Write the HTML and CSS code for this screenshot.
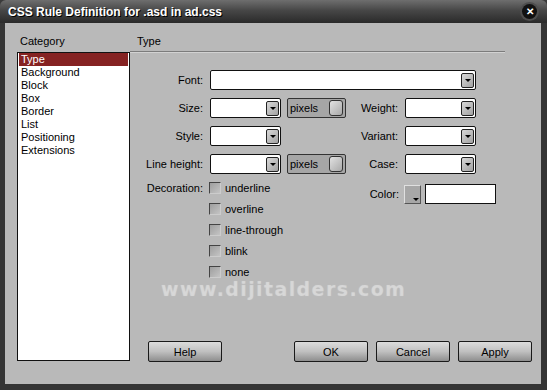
FILE: index.html
```html
<!DOCTYPE html>
<html>
<head>
    <title>CSS Rule Definition</title>
    <link rel="stylesheet" href="styles.css">
</head>
<body>
    <div class="window">
        <div class="titlebar">
            <span class="title">CSS Rule Definition for .asd in ad.css</span>
            <span class="close">&#x2715;</span>
        </div>

        <div class="dialog">
            <div class="category-col">
                <div class="col-head">Category</div>
                <ul class="category-list">
                    <li class="selected">Type</li>
                    <li>Background</li>
                    <li>Block</li>
                    <li>Box</li>
                    <li>Border</li>
                    <li>List</li>
                    <li>Positioning</li>
                    <li>Extensions</li>
                </ul>
            </div>

            <div class="panel">
                <div class="panel-head">Type</div>

                <div class="form">
                    <div class="row">
                        <label class="lbl">Font:</label>
                        <div class="select wide"><span class="arrow"></span></div>
                    </div>
                    <div class="row">
                        <label class="lbl">Size:</label>
                        <div class="select"><span class="arrow"></span></div>
                        <div class="unit">pixels<span class="toggle"></span></div>
                        <label class="lbl-r">Weight:</label>
                        <div class="select"><span class="arrow"></span></div>
                    </div>
                    <div class="row">
                        <label class="lbl">Style:</label>
                        <div class="select"><span class="arrow"></span></div>
                        <label class="lbl-r no-unit">Variant:</label>
                        <div class="select"><span class="arrow"></span></div>
                    </div>
                    <div class="row">
                        <label class="lbl">Line height:</label>
                        <div class="select"><span class="arrow"></span></div>
                        <div class="unit">pixels<span class="toggle"></span></div>
                        <label class="lbl-r">Case:</label>
                        <div class="select"><span class="arrow"></span></div>
                    </div>

                    <div class="deco-row">
                        <label class="lbl deco-lbl">Decoration:</label>
                        <div class="checks">
                            <div class="check"><span class="box"></span>underline</div>
                            <div class="check"><span class="box"></span>overline</div>
                            <div class="check"><span class="box"></span>line-through</div>
                            <div class="check"><span class="box"></span>blink</div>
                            <div class="check"><span class="box"></span>none</div>
                        </div>
                        <div class="color-group">
                            <label class="color-lbl">Color:</label>
                            <span class="swatch"></span>
                            <div class="color-input"></div>
                        </div>
                    </div>
                </div>

                <div class="buttons">
                    <button class="help-btn">Help</button>
                    <button>OK</button>
                    <button>Cancel</button>
                    <button>Apply</button>
                </div>
            </div>

            <div class="watermark">www.dijitalders.com</div>
        </div>
    </div>
</body>
</html>
```

FILE: styles.css
```css
body {
    margin: 0;
    background: #3a3a3a;
    font-family: "Liberation Sans", Arial, sans-serif;
    font-size: 11px;
    color: #000;
}
.window {
    width: 547px;
    height: 390px;
    background: #353535;
    border-radius: 6px 6px 0 0;
    display: flex;
    flex-direction: column;
    overflow: hidden;
}
.titlebar {
    height: 23px;
    flex-shrink: 0;
    display: flex;
    align-items: center;
    padding: 0 10px 0 8px;
    background: linear-gradient(#6e6e6e, #474747 45%, #2a2a2a);
}
.title {
    color: #fff;
    font-weight: bold;
    font-size: 12px;
    text-shadow: 1px 1px 0 #000;
}
.close {
    margin-left: auto;
    width: 15px;
    height: 15px;
    border-radius: 50%;
    background: #111;
    box-shadow: 0 0 0 2px #4e4e4e;
    color: #fff;
    font-size: 10px;
    font-weight: bold;
    line-height: 15px;
    text-align: center;
}
.dialog {
    position: relative;
    flex: 1;
    margin: 0 6px 6px 5px;
    background: #b9b9b9;
    display: flex;
    padding: 10px 0 0 12px;
}
.category-col {
    width: 113px;
    display: flex;
    flex-direction: column;
}
.col-head {
    height: 19px;
    line-height: 17px;
    padding-left: 3px;
}
.category-list {
    list-style: none;
    margin: 0;
    padding: 0;
    height: 307px;
    background: #fff;
    border: 1px solid #111;
}
.category-list li {
    height: 13px;
    line-height: 13px;
    padding-left: 2px;
    margin: 0 1px;
    font-size: 11px;
}
.category-list li.selected {
    background: #852222;
    color: #fff;
}
.panel {
    flex: 1;
    display: flex;
    flex-direction: column;
}
.panel-head {
    height: 18px;
    line-height: 16px;
    padding-left: 7px;
    margin-right: 36px;
    border-bottom: 1px solid #7c7c7c;
    box-shadow: 0 1px 0 #d2d2d2;
}
.form {
    margin-top: 18px;
    display: flex;
    flex-direction: column;
    gap: 8px;
}
.row {
    display: flex;
    align-items: center;
    height: 20px;
}
.lbl {
    width: 73px;
    margin-right: 7px;
    text-align: right;
}
.lbl-r {
    width: 52px;
    margin-right: 7px;
    text-align: right;
}
.lbl-r.no-unit {
    width: 117px;
}
.select {
    width: 68px;
    height: 18px;
    background: #fff;
    border: 1px solid #111;
    border-radius: 2px;
    display: flex;
    align-items: center;
    justify-content: flex-end;
    padding-right: 1px;
    box-sizing: content-box;
}
.select.wide {
    width: 263px;
}
.arrow {
    width: 11px;
    height: 13px;
    border: 1px solid #222;
    border-radius: 2px;
    background: linear-gradient(135deg, #d8d8d8, #a2a2a2);
    position: relative;
}
.arrow::after {
    content: "";
    position: absolute;
    left: 3px;
    top: 5px;
    border-left: 3px solid transparent;
    border-right: 3px solid transparent;
    border-top: 3px solid #000;
}
.unit {
    margin-left: 6px;
    width: 55px;
    height: 18px;
    background: #a6a6a6;
    border: 1px solid #333;
    border-radius: 2px;
    display: flex;
    align-items: center;
    padding-left: 2px;
    box-sizing: content-box;
    line-height: 18px;
}
.toggle {
    margin-left: auto;
    margin-right: 2px;
    width: 12px;
    height: 14px;
    border: 1px solid #333;
    border-radius: 3px;
    background: linear-gradient(135deg, #e2e2e2, #a9a9a9);
}
.deco-row {
    display: flex;
    align-items: flex-start;
    margin-top: -1px;
}
.deco-lbl {
    margin-right: 6px;
    margin-top: 0;
    line-height: 14px;
}
.checks {
    width: 150px;
    display: flex;
    flex-direction: column;
    gap: 7px;
}
.check {
    display: flex;
    align-items: center;
    height: 14px;
    line-height: 12px;
    gap: 4px;
}
.box {
    width: 10px;
    height: 10px;
    border: 1px solid;
    border-color: #444 #ccc #ccc #444;
    background: linear-gradient(135deg, #9e9e9e, #c4c4c4);
}
.color-group {
    display: flex;
    align-items: center;
    height: 20px;
    margin-top: 3px;
}
.color-lbl {
    width: 40px;
    margin-right: 5px;
    text-align: right;
}
.swatch {
    width: 15px;
    height: 17px;
    border: 1px solid;
    border-color: #e0e0e0 #555 #555 #e0e0e0;
    background: #a7a7a7;
    position: relative;
    margin-right: 4px;
}
.swatch::after {
    content: "";
    position: absolute;
    right: 1px;
    bottom: 2px;
    border-left: 3px solid transparent;
    border-right: 3px solid transparent;
    border-top: 3px solid #000;
}
.color-input {
    width: 69px;
    height: 18px;
    background: #fff;
    border: 1px solid #111;
}
.buttons {
    margin-top: auto;
    margin-bottom: 22px;
    display: flex;
    gap: 8px;
}
button {
    width: 74px;
    height: 21px;
    border: 1px solid #1a1a1a;
    border-radius: 2px;
    background: linear-gradient(#dcdcdc, #c0c0c0 50%, #8e8e8e);
    font-family: "Liberation Sans", Arial, sans-serif;
    font-size: 11px;
    color: #000;
    padding: 0;
}
.help-btn {
    margin-left: 18px;
    margin-right: 64px;
}
.watermark {
    position: absolute;
    left: 156px;
    top: 259px;
    line-height: 14px;
    font-family: "DejaVu Sans", sans-serif;
    font-weight: bold;
    font-size: 19px;
    letter-spacing: 1.4px;
    color: rgba(255, 255, 255, 0.22);
    text-shadow: 0 0 1px rgba(255, 255, 255, 0.3);
}
```
